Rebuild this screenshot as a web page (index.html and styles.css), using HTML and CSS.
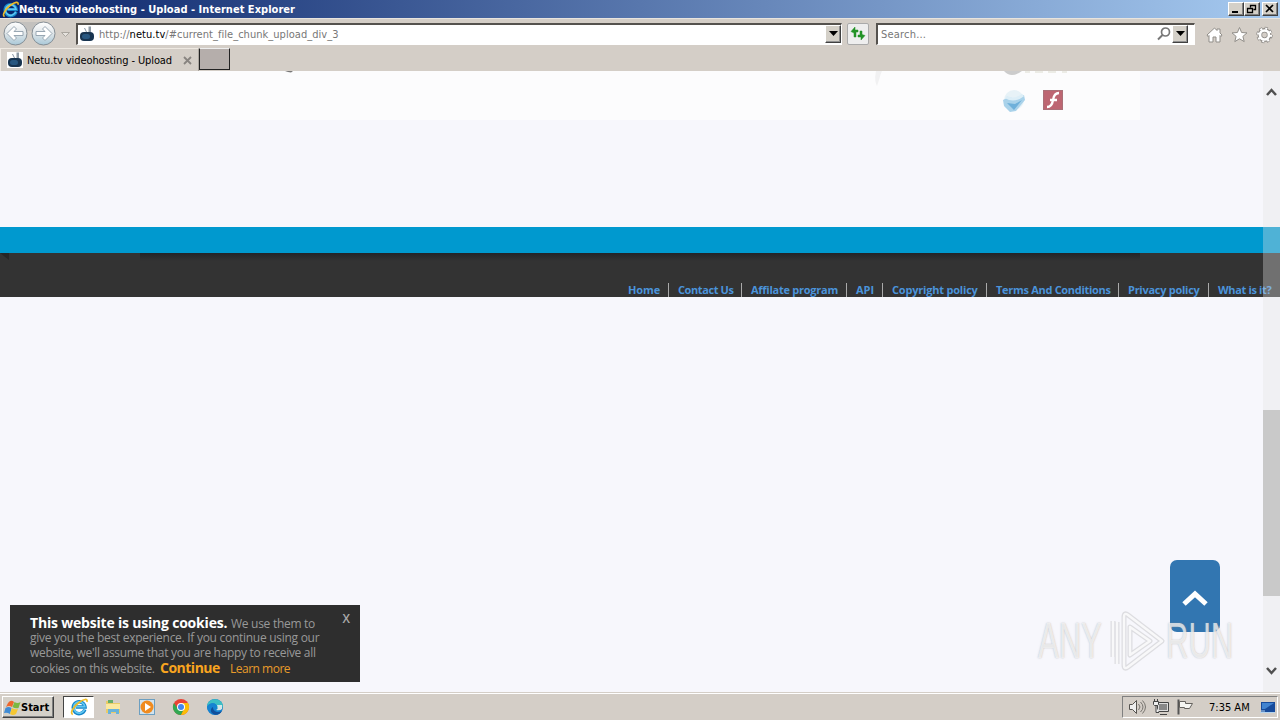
FILE: index.html
```
<!DOCTYPE html>
<html lang="en">
<head>
    <meta charset="UTF-8">
    <title>Netu.tv videohosting - Upload</title>
    <link rel="stylesheet" href="styles.css">
</head>
<body>

<svg width="0" height="0" class="defs">
    <defs>
        <linearGradient id="metal" x1="0" y1="0" x2="0" y2="1">
            <stop offset="0" stop-color="#fff"/><stop offset=".5" stop-color="#dfe5e8"/><stop offset="1" stop-color="#a9c8d8"/>
        </linearGradient>
        <symbol id="ie" viewBox="0 0 16 16">
            <path d="M13.2 10.2A5.3 5.3 0 1 1 13.4 8H5" fill="none" stroke="#1686c8" stroke-width="3"/>
            <path d="M13 10A5 5 0 1 1 13.2 7.8H5" fill="none" stroke="#62c8f3" stroke-width="1.5"/>
            <path d="M2.5 14.5C-.5 14 3 7.5 8 4c4-3 8-4 7-.5" fill="none" stroke="#efbd28" stroke-width="1.5"/>
        </symbol>
        <symbol id="netu" viewBox="0 0 16 16">
            <path d="M0 0h16v16H0z" fill="#fff"/>
            <path d="M8 7L5.500 2" stroke="#8795a4" stroke-width="1"/>
            <path d="M9.500 0.500h2.500v6h-2.500z" fill="#8f9ba6"/>
            <rect x="1" y="6" width="14" height="9" rx="4" fill="#183450"/>
            <rect x="3" y="8" width="8" height="5" rx="2.5" fill="#285780"/>
        </symbol>
    </defs>
</svg>

<header class="titlebar">
    <svg class="title-icon" width="17" height="17"><use href="#ie"/></svg>
    <span class="title-text">Netu.tv videohosting - Upload - Internet Explorer</span>
    <div class="window-buttons">
        <button><svg width="12" height="10"><path d="M2 8h6" stroke="#000" stroke-width="2"/></svg></button>
        <button><svg width="12" height="10"><path d="M4.5 3.5v-2h5v4h-2M4 1.500h6M1.500 4.500h5v4h-5zM1 4.500h6" fill="none" stroke="#000" stroke-width="1.300"/></svg></button>
        <button class="close"><svg width="12" height="10"><path d="M2 1l7 7M9 1L2 8" stroke="#000" stroke-width="1.700"/></svg></button>
    </div>
</header>

<div class="navbar">
    <svg class="history" width="72" height="30">
        <path d="M15 3h29v5q-15 8-29 0z" fill="#c3c1be"/>
        <circle cx="15.500" cy="14.500" r="11.500" fill="url(#metal)" stroke="#858e95"/>
        <circle cx="43.500" cy="14.500" r="11.500" fill="url(#metal)" stroke="#858e95"/>
        <path d="M7 14.500l7-7 2.500 2.500-2.500 2.500h9v4h-9l2.500 2.500-2.500 2.500zM52 14.500l-7-7-2.500 2.500 2.500 2.500h-9v4h9l-2.500 2.500 2.500 2.500z" fill="#fff" stroke="#8e9eac" stroke-width=".9"/>
        <path d="M61.500 13.500h8l-4 4z" fill="#e6e3de" stroke="#aaa69f"/>
    </svg>
    <div class="field address">
        <svg width="16" height="16"><use href="#netu"/></svg>
        <span class="url">http://<b>netu.tv</b>/#current_file_chunk_upload_div_3</span>
        <button class="drop"><svg width="9" height="6"><path d="M0 0h9L4.500 5z"/></svg></button>
    </div>
    <button class="refresh"><svg width="16" height="16"><path d="M1 5.500l4-4.500v3h3v2H6v5H4V7zM15 9.500l-4 4.500v-3H8V9h2V5h2v3.500z" fill="#239326" stroke="#239326" stroke-width=".5"/></svg></button>
    <div class="field search">
        <span class="search-text">Search...</span>
        <svg class="lens" width="14" height="14"><circle cx="8.500" cy="5" r="4" fill="none" stroke="#777" stroke-width="1.700"/><path d="M5.500 8L1 12.500" stroke="#777" stroke-width="2"/></svg>
        <button class="drop"><svg width="9" height="6"><path d="M0 0h9L4.500 5z"/></svg></button>
    </div>
    <div class="tools">
        <svg width="17" height="18"><path d="M1 9l7.500-7L11 4.500V3h3v4l2 2-1 1.500-1-1V16h-4v-5H7v5H3V9.500l-1 1z" fill="#fff" stroke="#918e89"/></svg>
        <svg width="17" height="18"><path d="M8.500 1.500l2.100 5 5.400.4-4.100 3.500 1.300 5.200-4.700-2.800-4.700 2.800 1.300-5.200L1 6.900l5.400-.4z" fill="#fff" stroke="#918e89"/></svg>
        <svg width="17" height="18"><circle cx="8.500" cy="9" r="6.700" fill="none" stroke="#8d8a86" stroke-width="3" stroke-dasharray="3 2.260"/><circle cx="8.500" cy="9" r="4.700" fill="none" stroke="#8d8a86" stroke-width="4.500"/><circle cx="8.500" cy="9" r="4.500" fill="none" stroke="#fff" stroke-width="2.700"/><circle cx="8.500" cy="9" r="6.500" fill="none" stroke="#fff" stroke-width="2" stroke-dasharray="2 3.100"/></svg>
    </div>
</div>

<div class="tabs">
    <div class="tab">
        <svg width="16" height="16"><use href="#netu"/></svg>
        <span class="tab-text">Netu.tv videohosting - Upload</span>
        <svg class="tab-close" width="9" height="9"><path d="M1 1l7 7M8 1L1 8" stroke="#888480" stroke-width="1.800"/></svg>
    </div>
    <div class="new-tab"></div>
</div>

<main class="page">
    <section class="content">
        <div class="panel">
            <svg class="panel-art" width="1000" height="49">
                <path d="M145 0h8l-2 1.500-3-.5z" fill="#777"/>
                <path d="M736 0q-2 10 1 15l2-6q1-5 3-9z" fill="#f1f1f2"/>
                <path d="M864 0q7 8 18 0z" fill="#ccc"/>
                <path d="M885 0h5v2h-5zM895 0h8v2h-8zM908 0h8v2h-8zM922 0h5v2h-5z" fill="#ecece6"/>
                <circle cx="874" cy="29" r="10" fill="#e7f2f7"/>
                <path d="M863 29l6-3 6 2 9-4 1 5-9 11-6 1-6-6z" fill="#a9d2ea"/>
                <path d="M867 32l8 1 7-4-8 10z" fill="#6eb0da"/>
                <path d="M866 26q8 5 17-2" fill="none" stroke="#dceef7" stroke-width="3"/>
                <rect x="903" y="19" width="20" height="20" rx="1" fill="#bd6672"/>
                <rect x="903.500" y="19.500" width="19" height="19" fill="none" stroke="#aa7078"/>
                <path d="M919 22q-5 0-6 7t-6 7M910 29h7" fill="none" stroke="#fff" stroke-width="2.300"/>
            </svg>
        </div>
    </section>
    <div class="blue-bar"></div>
    <footer class="footer">
        <div class="footer-top">
            <svg width="10" height="8"><path d="M0 0h9v7z" fill="#262626"/></svg>
            <div class="footer-shade"></div>
        </div>
        <nav class="footer-links">
            <a><span class="l1">Home</span></a>
            <a><span class="l2">Contact Us</span></a>
            <a><span class="l3">Affilate program</span></a>
            <a><span class="l4">API</span></a>
            <a><span class="l5">Copyright policy</span></a>
            <a><span class="l6">Terms And Conditions</span></a>
            <a><span class="l7">Privacy policy</span></a>
            <a><span class="l8">What is it?</span></a>
        </nav>
    </footer>

    <div class="scrollbar">
        <svg width="17" height="42"><path d="M4 24l4.500-5 4.500 5" fill="none" stroke="#505050" stroke-width="2.500"/></svg>
        <div class="thumb"></div>
        <svg width="17" height="42"><path d="M4 18l4.500 5 4.500-5" fill="none" stroke="#505050" stroke-width="2.500"/></svg>
    </div>

    <div class="to-top"><svg width="30" height="22"><path d="M4 18L15 8l11 10" fill="none" stroke="#fff" stroke-width="5"/></svg></div>

    <div class="cookies">
        <span class="cookie-close">X</span>
        <div class="row r1"><strong>This website is using cookies.</strong><span>We use them to</span></div>
        <div class="row r2">give you the best experience. If you continue using our</div>
        <div class="row r3">website, we'll assume that you are happy to receive all</div>
        <div class="row r4"><span>cookies on this website.</span><b>Continue</b><i>Learn more</i></div>
    </div>

    <div class="watermark">
        <span>ANY</span>
        <svg width="62" height="66">
            <g fill="none" stroke-linejoin="round">
                <path d="M24 7l34 26-34 26q-4 3-4-2V9q0-5 4-2zM26 19l20 14-20 14zM13 14v42M9 13v36" stroke="#c4c4c6" stroke-width="5" opacity=".5"/>
                <path d="M24 7l34 26-34 26q-4 3-4-2V9q0-5 4-2zM26 19l20 14-20 14zM13 14v42M9 13v36" stroke="#fff" stroke-width="2.500" opacity=".8"/>
            </g>
        </svg>
        <span>RUN</span>
    </div>
</main>

<div class="taskbar">
    <button class="start">
        <svg width="17" height="17"><path d="M4 4q3-4 6-1L8 8Q5 6 2 8z" fill="#ed672d"/><path d="M10.500 3q3 2 6 0l-2 6q-3 1-6-1z" fill="#7bb842"/><path d="M1.500 9q3-2 6 0l-1.500 6q-3-2-6-1z" fill="#408bd4"/><path d="M8 9q3 2 6 1l-2 5q-3 2-6 0z" fill="#f5c732"/></svg>
        <span>Start</span>
    </button>
    <div class="task active"><svg width="18" height="18"><use href="#ie"/></svg></div>
    <div class="task"><svg width="18" height="18"><path d="M2 3h5l1 2h8v10H2z" fill="#e9cb67"/><path d="M4 2h5v3H4z" fill="#65ad69"/><path d="M2 6h14v5H2z" fill="#fae9a1"/><path d="M4 16v-5h11v5h-3v-2H7v2z" fill="#69b3da"/></svg></div>
    <div class="task"><svg width="18" height="18"><rect x="1.500" y="1.500" width="15" height="15" fill="#d2e3ee" stroke="#6c9fc1"/><circle cx="9" cy="9" r="6.500" fill="#f08b1f"/><path d="M7 5l6 4-6 4z" fill="#fff"/></svg></div>
    <div class="task"><svg width="18" height="18"><circle cx="9" cy="9" r="8" fill="#e94335"/><path d="M2 5a8 8 0 0 0 7 12l3-6H6z" fill="#32a853"/><path d="M9 17a8 8 0 0 0 7-12H9l3 6z" fill="#fbbd06"/><circle cx="9" cy="9" r="4" fill="#fff"/><circle cx="9" cy="9" r="3" fill="#4287ee"/></svg></div>
    <div class="task"><svg width="18" height="18"><circle cx="9" cy="9" r="8" fill="#147ac7"/><path d="M1 9C1-1 16-1 17 8c0 4-7 4-6 1 0-5-8-5-10 0z" fill="#3cbfc4"/><path d="M1 9c2-5 10-5 10 0-1 0-1 3 5 3-3 8-14 5-15-3z" fill="#1684d2"/><path d="M7 9c0 5 5 6 9 4-2 4-7 5-10 2-2-2-1-5 1-6z" fill="#114f9b"/><path d="M11 7q2 4-1 5 4 1 6-1V7z" fill="#d4e6e8"/></svg></div>

    <div class="tray">
        <svg width="18" height="18"><path d="M1.500 6.500h3l4-4v13l-4-4h-3z" fill="#eee" stroke="#55534f"/><path d="M10.500 6q3 3 0 6M12.500 4q5 5 0 10M14.500 2.500q6 6.500 0 13" fill="none" stroke="#77746f"/></svg>
        <svg width="18" height="18"><path d="M5.500 4.500h11v9h-11z" fill="#ddd" stroke="#444"/><path d="M7 6h8v6H7z" fill="#888"/><path d="M8 16.500h7" stroke="#444"/><path d="M1.500 3.500h5v3l-1 1h-3l-1-1zM2.500 1v2M5.500 1v2M4 8v6.500h3" fill="#eee" stroke="#444"/></svg>
        <svg width="18" height="18"><path d="M2.500 1.500v15" stroke="#555" stroke-width="2"/><path d="M3.500 3.500h6v2h7l-3 5h-5v-1h-5z" fill="#f5f5f2" stroke="#65625e"/></svg>
        <span class="clock">7:35 AM</span>
        <svg class="desktop" width="16" height="14"><path d="M1 2h14v10H1z" fill="#174b9b"/><path d="M2 3h12l-9 6H2z" fill="#4284d0"/><path d="M0 12.500h15M1 11h4" stroke="#b5d4ee"/></svg>
    </div>
</div>

</body>
</html>
```
FILE: styles.css
```
* {
    box-sizing: border-box;
}
body {
    margin: 0;
    width: 1280px;
    height: 720px;
    overflow: hidden;
    display: flex;
    flex-direction: column;
    background: #d4cec7;
    color: #000;
    font: 11px "DejaVu Sans Condensed", "DejaVu Sans", sans-serif;
}
.defs {
    position: absolute;
}
svg {
    display: block;
    flex: none;
}
button {
    margin: 0;
    padding: 0;
    font: inherit;
    border: 1px solid;
    border-color: #fff #404040 #404040 #fff;
    background: #d4d0c8;
}

/* window frame */
.titlebar {
    flex: none;
    height: 18px;
    display: flex;
    align-items: center;
    padding: 0 2px;
    color: #fff;
    background: linear-gradient(90deg, #0a246a, #a6caf0);
}
.title-text {
    font-weight: bold;
    white-space: nowrap;
    letter-spacing: 0.03px;
}
.window-buttons {
    display: flex;
    margin-left: auto;
}
.window-buttons button {
    width: 16px;
    height: 14px;
    padding: 1px;
    box-shadow: inset -1px -1px #808080;
}
.window-buttons .close {
    margin-left: 2px;
}

.navbar {
    flex: none;
    height: 30px;
    display: flex;
    align-items: center;
    border-top: 1px solid #e8e4de;
}
.history {
    margin-right: 4px;
}
.field {
    height: 22px;
    display: flex;
    align-items: center;
    background: #fff;
    border: solid;
    border-width: 2px 1px 1px 2px;
    border-color: #55524e #fff #fff #55524e;
    color: #777;
}
.address {
    width: 766px;
    padding-left: 1px;
}
.url {
    margin-left: 4px;
    white-space: nowrap;
    letter-spacing: 0.04px;
}
.url b {
    font-weight: normal;
    color: #000;
}
.search-text {
    letter-spacing: 0.2px;
}
.drop {
    width: 16px;
    height: 18px;
    display: flex;
    align-items: center;
    justify-content: center;
    box-shadow: inset -1px -1px #909090;
}
.address .drop {
    margin-left: auto;
}
.refresh {
    width: 22px;
    height: 22px;
    margin: 0 7px 0 5px;
    padding: 2px;
    border: 1px solid #aaa;
    border-radius: 2px;
    background: #eee;
}
.search {
    width: 319px;
    padding: 0 5px 0 3px;
}
.search .drop {
    margin-right: 1px;
}
.lens {
    margin: 0 1px 0 auto;
}
.tools {
    display: flex;
    gap: 8px;
    margin: 3px 0 0 11px;
}

.tabs {
    flex: none;
    height: 23px;
    display: flex;
}
.tab {
    width: 199px;
    display: flex;
    align-items: center;
    padding-left: 6px;
    border: 1px solid #eee9e2;
    border-right-color: #aaa59e;
    border-bottom: 0;
}
.tab-text {
    width: 156px;
    margin-left: 4px;
    white-space: nowrap;
    letter-spacing: -0.1px;
}
.new-tab {
    width: 31px;
    height: 22px;
    border: 1px solid #222;
    border-top-color: #eee;
    background: #b5aeab;
}

/* page */
.page {
    position: relative;
    flex: 1;
    overflow: hidden;
    background: #f7f7fc;
}
.content {
    height: 156px;
}
.panel {
    width: 1000px;
    height: 49px;
    margin: 0 auto;
    background: #fcfcfd;
}
.blue-bar {
    height: 26px;
    background: #0099cf;
}
.footer {
    height: 44px;
    background: #333;
}
.footer-top {
    display: flex;
    height: 8px;
}
.footer-shade {
    width: 1000px;
    height: 8px;
    margin-left: 130px;
    background: linear-gradient(#222428, #333);
}
.footer-links {
    display: grid;
    grid-template-columns: 41px 73px 105px 36px 104px 132px 90px 60px;
    margin: 22px 0 0 628px;
    color: #4b94db;
    font: bold 11px/14px "Open Sans", "Noto Sans", sans-serif;
}
.footer-links a {
    height: 14px;
    white-space: nowrap;
    border-right: 1px solid #aaa;
    padding-left: 9px;
}
.footer-links a:first-child {
    padding-left: 0;
}
.footer-links a:last-child {
    border: 0;
}
.l1 { letter-spacing: -0.1px; }
.l2 { letter-spacing: -0.4px; }
.l3 { letter-spacing: -0.25px; }
.l5 { letter-spacing: -0.2px; }
.l6 { letter-spacing: -0.3px; }
.l7 { letter-spacing: -0.27px; }
.l8 { letter-spacing: -0.35px; }
.scrollbar {
    position: absolute;
    top: 0;
    right: 0;
    width: 17px;
    height: 621px;
    display: flex;
    flex-direction: column;
    background: rgba(225, 225, 225, 0.35);
}
.thumb {
    height: 186px;
    margin: 297px 0 auto;
    background: #c9c9c9;
}
.to-top {
    position: absolute;
    left: 1170px;
    top: 489px;
    width: 50px;
    height: 72px;
    padding: 26px 10px;
    border-radius: 7px;
    background: #3276b1;
}
.cookies {
    position: absolute;
    left: 10px;
    top: 534px;
    width: 350px;
    height: 77px;
    padding: 10px 20px;
    background: #2e2e2e;
    color: #999;
    font: 12px/15px "Open Sans", "Noto Sans", sans-serif;
}
.row {
    height: 15px;
    display: flex;
    align-items: baseline;
    white-space: nowrap;
    letter-spacing: -0.28px;
}
.row strong {
    width: 201px;
    color: #fff;
    font-size: 14px;
    letter-spacing: -0.2px;
}
.r3 {
    letter-spacing: -0.31px;
}
.r4 span {
    width: 130px;
    letter-spacing: -0.33px;
}
.row b {
    width: 70px;
    color: #f9a51f;
    font-size: 14px;
    letter-spacing: -0.5px;
}
.row i {
    color: #e89b2a;
    font-style: normal;
    letter-spacing: -0.5px;
}
.cookie-close {
    position: absolute;
    top: 6px;
    right: 10px;
    font-weight: 600;
    color: #aaa;
}
.watermark {
    position: absolute;
    left: 1038px;
    top: 537px;
    height: 66px;
    display: flex;
    align-items: center;
    color: rgba(255, 255, 255, 0.7);
    font: 50px/66px "Liberation Sans", sans-serif;
    text-shadow: 0 0 2px rgba(140, 140, 140, 0.6);
}
.watermark span {
    width: 66px;
    transform: scaleX(0.62);
    transform-origin: left;
}

/* taskbar */
.taskbar {
    flex: none;
    height: 28px;
    display: flex;
    align-items: center;
    padding: 2px 2px 0;
    box-shadow: inset 0 1px #d4cec7, inset 0 2px #fff;
}
.start {
    width: 52px;
    height: 22px;
    display: flex;
    align-items: center;
    margin-right: 9px;
    padding-left: 1px;
    font-weight: bold;
    box-shadow: inset -1px -1px #808080;
}
.task {
    width: 30px;
    height: 22px;
    display: flex;
    align-items: center;
    justify-content: center;
    margin-right: 4px;
}
.task.active {
    width: 31px;
    margin-right: 4px;
    background: #fff;
    border: 1px solid;
    border-color: #444 #fff #fff #444;
}
.tray {
    width: 156px;
    height: 22px;
    display: flex;
    align-items: center;
    margin-left: auto;
    padding-left: 5px;
    gap: 6px;
    border: 1px solid;
    border-color: #808080 #fff #fff #808080;
}
.clock {
    width: 43px;
    margin-left: 9px;
    white-space: nowrap;
}
.desktop {
    margin-left: 2px;
}
```
